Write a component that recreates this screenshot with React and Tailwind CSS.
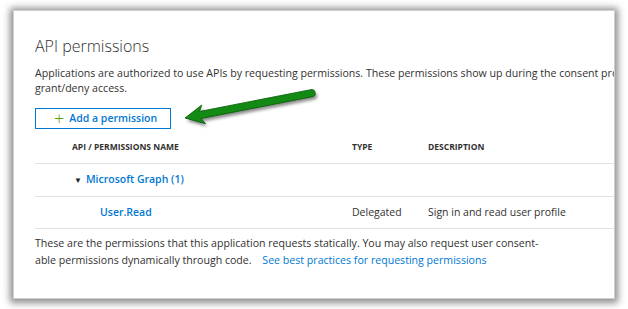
const font = "font-['Open_Sans','Noto_Sans',sans-serif]";

function GreenArrow() {
  // drawn pointing left, then rotated so the tail rises to the upper right
  const d =
    "M0,0 L19,-9.5 L15.5,-3.6 L129,-3.6 A3.6,3.6 0 0 1 129,3.6 L15.5,3.6 L19,9.5 Z";
  return (
    <svg
      className="pointer-events-none absolute left-0 top-0"
      width="628"
      height="309"
      viewBox="0 0 628 309"
      aria-hidden
    >
      <defs>
        <filter id="arrow-blur" x="-20%" y="-50%" width="140%" height="200%">
          <feGaussianBlur stdDeviation="1.6" />
        </filter>
      </defs>
      <g transform="translate(187,121) rotate(-11.1)">
        <path d={d} fill="#000" opacity="0.45" filter="url(#arrow-blur)" />
      </g>
      <g transform="translate(185,118) rotate(-11.1)">
        <path d={d} fill="#138a13" stroke="#0b5e0b" strokeWidth="0.8" strokeLinejoin="round" />
      </g>
    </svg>
  );
}

function Row({ name, type, desc, className }) {
  return (
    <div className={`grid h-[32px] grid-cols-[317px_76px_1fr] items-center border-b border-[#e3e3e3] ${className}`}>
      <div>{name}</div>
      <div>{type}</div>
      <div className="whitespace-nowrap">{desc}</div>
    </div>
  );
}

export default function App() {
  return (
    <div className={`relative h-[309px] w-[628px] overflow-hidden bg-white pl-[13px] pt-[10px] ${font}`}>
      <section className="h-[289px] w-[602px] overflow-hidden border border-[#cfcfcf] bg-white pl-[21px] pt-[24px] text-[#323130] shadow-[0_1px_7px_3px_rgba(0,0,0,0.45)]">
        <h1 className="text-[16px] font-light leading-[22px]">API permissions</h1>

        <p className="mt-[9px] whitespace-nowrap text-[10.6px] leading-[15px]">
          Applications are authorized to use APIs by requesting permissions. These permissions show up during the consent prompt where users or admins can
          <br />
          grant/deny access.
        </p>

        <button
          type="button"
          className="mt-[12px] flex h-[21px] w-[136px] items-center gap-[5px] border border-[#0078d4] pl-[18px] text-[10.5px] font-semibold text-[#0078d4]"
        >
          <span className="mt-[-2px] text-[18px] font-light leading-none text-[#57a300]">+</span>
          Add a permission
        </button>

        <div className="mt-[3px] text-[10.5px]">
          <Row
            className="text-[8.5px] font-bold"
            name={<span className="pl-[37px]">API / PERMISSIONS NAME</span>}
            type="TYPE"
            desc="DESCRIPTION"
          />
          <Row
            className="h-[33px]"
            name={
              <span className="flex items-center gap-[4px] pl-[39px] font-semibold text-[#0078d4]">
                <span className="text-[8px] text-[#201f1e]">▼</span>
                Microsoft Graph (1)
              </span>
            }
          />
          <Row
            className="h-[31px]"
            name={<span className="pl-[65px] font-semibold text-[#0078d4]">User.Read</span>}
            type="Delegated"
            desc="Sign in and read user profile"
          />
        </div>

        <p className="mt-[6px] whitespace-nowrap text-[10.6px] leading-[17px]">
          These are the permissions that this application requests statically. You may also request user consent-
          <br />
          able permissions dynamically through code.{" "}
          <span className="ml-[8px] text-[#0078d4]">See best practices for requesting permissions</span>
        </p>
      </section>
      <GreenArrow />
    </div>
  );
}
